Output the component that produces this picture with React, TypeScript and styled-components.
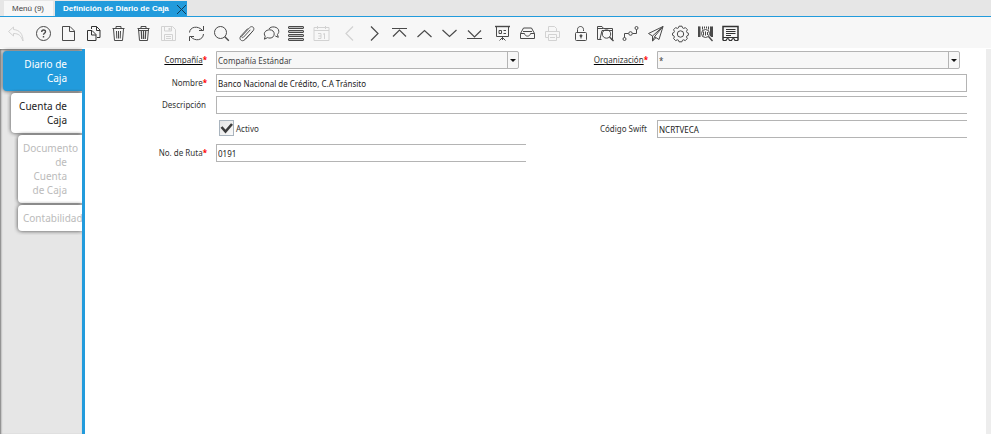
import React from "react";
import styled, { createGlobalStyle, css } from "styled-components";

const BLUE = "#229bdc";

const GlobalStyle = createGlobalStyle`
  *, *::before, *::after { box-sizing: border-box; }
  body { margin: 0; background: #fff; }
  button, input, select { font: inherit; margin: 0; }
`;

const Page = styled.div`
  min-height: 100vh;
  display: flex;
  flex-direction: column;
  font-family: "Noto Sans", sans-serif;
  font-size: 8px;
  color: #333;
`;

const WindowTabs = styled.nav`
  display: flex;
  align-items: stretch;
  gap: 2px;
  height: 17px;
  padding: 1px 4px 0;
  background: #e6e6e6;
  border-bottom: 1px solid ${BLUE};
  font-family: "Liberation Sans", sans-serif;
`;

const WindowTab = styled.div<{ $active?: boolean }>`
  display: flex;
  align-items: center;
  padding: ${(p) => (p.$active ? "0 0 0 8px" : "0 9px 0 8px")};
  background: ${(p) => (p.$active ? BLUE : "#f7f7f7")};
`;

const TabButton = styled.button<{ $active?: boolean }>`
  border: 0;
  padding: 0;
  background: none;
  white-space: nowrap;
  font-size: 8px;
  line-height: 14px;
  font-weight: ${(p) => (p.$active ? 700 : 400)};
  color: ${(p) => (p.$active ? "#fff" : "#444")};
`;

const CloseButton = styled.button`
  display: flex;
  align-items: center;
  border: 0;
  padding: 0;
  margin: 2px 0 0 7px;
  background: none;
`;

const CloseIcon = styled.svg`
  width: 11px;
  height: 11px;
  fill: none;
  stroke: #123d58;
`;

const Toolbar = styled.div`
  display: flex;
  gap: 3px;
  height: 32px;
  padding: 0 3px;
  background: #f7f7f7;
  border-bottom: 1px solid #fff;
`;

const ToolGroup = styled.div`
  display: flex;
`;

const ToolButton = styled.button`
  display: flex;
  align-items: center;
  justify-content: center;
  width: 25px;
  padding: 1px 0 0;
  border: 0;
  background: none;
  color: #4a4a4a;
  &:disabled { color: #d2d2d2; }
`;

const Glyph = styled.svg`
  width: 17px;
  height: 17px;
  flex: none;
  fill: none;
  stroke: currentColor;
  stroke-width: 1;
  overflow: visible;
`;

const Body = styled.div`
  flex: 1;
  display: flex;
`;

const Sidebar = styled.nav`
  flex: none;
  display: flex;
  flex-direction: column;
  align-items: flex-end;
  gap: 2px;
  width: 85px;
  padding-top: 2px;
  background: #e6e6e6;
  border-right: 3px solid ${BLUE};
  box-shadow: inset 1px 1px 2px #777;
`;

const SideTab = styled.button<{ $level: number; $active?: boolean }>`
  width: ${(p) => [79, 71, 64][p.$level]}px;
  padding: 6px 15px 6px 5px;
  border: 0;
  border-radius: 4px 0 0 4px;
  background: ${(p) => (p.$active ? BLUE : "#fff")};
  color: ${(p) => (p.$active ? "#fff" : "#222")};
  box-shadow: 0 0 4px #444;
  clip-path: inset(-4px 0 -4px -4px);
  text-align: right;
  font-size: 10px;
  line-height: 14px;
  &:disabled { color: #bbb; }
`;

const Content = styled.main`
  flex: 1;
  min-width: 0;
  padding: 2px 19px 0 0;
  border-right: 5px solid #ededed;
`;

const Form = styled.form`
  display: grid;
  grid-template-columns: 131fr 310fr 131fr 310fr;
  grid-template-rows: 23px 22px 24px 24px 18px;
  align-items: start;
`;

const Label = styled.label<{ $link?: boolean; $required?: boolean }>`
  justify-self: end;
  padding-right: ${(p) => (p.$required ? 9 : 10)}px;
  line-height: 18px;
  white-space: nowrap;
  color: #333;
  span {
    ${(p) => p.$link && css`
      text-decoration: underline 1px #000;
      text-decoration-skip-ink: none;
      text-underline-offset: 1px;
    `}
  }
  ${(p) => p.$required && css`&::after { content: "*"; color: #f00; font-weight: 700; }`}
`;

const TextInput = styled.input<{ $wide?: boolean; $open?: boolean }>`
  width: 100%;
  min-width: 0;
  height: 18px;
  padding: 0 1px;
  border: 1px solid #b4b4b4;
  border-radius: 0;
  background: #fff;
  color: #222;
  outline: 0;
  ${(p) => p.$wide && css`grid-column: 2 / -1;`}
  ${(p) => p.$open && css`border-right: 0;`}
`;

const Combo = styled.div`
  display: flex;
  height: 18px;
  margin-right: 7px;
  border: 1px solid #b4b4b4;
  border-radius: 0 2px 2px 0;
  background: #f7f7f7;
`;

const ComboSelect = styled.select`
  flex: 1;
  min-width: 0;
  padding: 0 1px;
  border: 0;
  appearance: none;
  background: none;
  color: #444;
  outline: 0;
`;

const ComboArrow = styled.span`
  display: flex;
  align-items: center;
  justify-content: center;
  width: 11px;
  border-left: 1px solid #b4b4b4;
  pointer-events: none;
  &::before {
    content: "";
    border: 3px solid transparent;
    border-top-color: #111;
    border-bottom: 0;
  }
`;

const CheckField = styled.label`
  grid-column: 2;
  display: flex;
  align-items: center;
  gap: 2px;
  height: 16px;
  padding-left: 3px;
`;

const CheckBox = styled.span`
  display: grid;
  > * { grid-area: 1 / 1; }
`;

const CheckInput = styled.input`
  width: 15px;
  height: 16px;
  appearance: none;
  border: 1px solid #a9b4be;
  background: linear-gradient(135deg, #e4e4e4, #fafafa);
  & + svg { visibility: hidden; }
  &:checked + svg { visibility: visible; }
`;

const CheckMark = styled.svg`
  width: 15px;
  height: 16px;
  fill: none;
  stroke: #3c3c3c;
  stroke-width: 2.6;
  pointer-events: none;
`;

type Tool = { name: string; off?: boolean; draw: React.ReactNode };

const groups: Tool[][] = [
  [
    { name: "Deshacer", off: true, draw: <path d="M6.500 2L1.500 6.500l5 4.500V8.500c5 0 7.500 2 9.500 7.500 0-6.500-3-11-9.500-11.500z" /> },
  ],
  [
    { name: "Ayuda", draw: <><circle cx="8.500" cy="8.500" r="7" /><path strokeWidth="1.400" d="M6.700 7c0-2.600 3.800-2.600 3.800-.3 0 1.500-2 1.600-2 3M8.500 11v1.400" /></> },
    { name: "Nuevo", draw: <path d="M2.500 1.500H10l4.500 4.500v9.500h-12zM9.500 1.500v5h5" /> },
    { name: "Copiar", draw: <g stroke="#333"><path d="M6.500 4V1.500h5l3.500 3.500v7.500h-3M11.500 1.500v4H15" /><path d="M2.500 5.500H7l4 4v6H2.500zM6.500 5.500v4.500H11" /></g> },
    { name: "Eliminar", draw: <path d="M2.500 3.500h12M6 3.500v-2h5v2M3.500 4l1 11.500h8l1-11.500M6.500 6l.3 7.500M8.500 6v7.500M10.500 6l-.3 7.500" /> },
    { name: "Eliminar selección", draw: <><path d="M2.500 3.500h12M6 3.500v-2h5v2M3.500 4l1 11.500h8l1-11.500M3 5.500h11" /><path strokeWidth="1.200" d="M6.300 6l.4 8M8.500 6v8M10.700 6l-.4 8" /></> },
    { name: "Guardar", off: true, draw: <><path d="M1.500 1.500h11l3 3v11h-14zM4.500 2v4h7V2M4.500 15V9.500h8V15M6 11.500h5M6 13.500h5" /><path d="M9.500 3v2.500" strokeWidth="2" /></> },
  ],
  [
    { name: "Refrescar", draw: <path d="M1.500 7.500C2 1.500 10 .5 14 5M15.500 1v4.500H11M15.500 9C15 15.500 7 16.500 3 12M1.500 16v-4.500H6" /> },
    { name: "Buscar", draw: <><circle cx="7.500" cy="7.500" r="6" /><path strokeWidth="1.400" d="M11.800 11.800l4 4" /></> },
    { name: "Adjunto", draw: <path strokeWidth=".9" d="M12.300 4.800l-6.800 7.400c-1 1.100-2.500-.2-1.500-1.300L11.500 2.700c2.700-2.800 6 .5 3.500 3.200L7 14.500c-3 3.200-7-.5-4-3.700l6.700-7.300M15 5.900l-8 8.600" /> },
    { name: "Chat", draw: <><path d="M6 4C7.500.7 15.800 1.200 15.800 6.300c0 1.700-.8 2.600-1.400 3.100l.9 2.900-3-1.300" /><path d="M6.700 4.800c5.900 0 6 8 .3 8.300-1 0-1.700-.2-2.400-.5l-3.200 1.600.8-3C-.3 8 2.900 4.800 6.700 4.800z" /></> },
    { name: "Rejilla", draw: <g fill="#bbb"><rect x=".5" y="1.500" width="15" height="2" rx=".5" /><rect x=".5" y="5.500" width="15" height="2" rx=".5" /><rect x=".5" y="9.500" width="15" height="2" rx=".5" /><rect x=".5" y="13.500" width="15" height="2" rx=".5" /></g> },
    { name: "Calendario", off: true, draw: <path d="M1 2.500h15v13H1zM1 5.500h15M4.500 1v3M12.500 1v3M5 8.500h3v5H5M5.500 11H8M10 9.300l1.500-.8v5.500" /> },
  ],
  [
    { name: "Anterior", off: true, draw: <path strokeWidth="1.200" d="M12 1.500L5 8.500l7 7" /> },
    { name: "Siguiente", draw: <path strokeWidth="1.200" d="M5 1.500l7 7-7 7" /> },
    { name: "Primer registro", draw: <path strokeWidth="1.200" d="M1 3.500h15M2 11.500L8.500 5 15 11.500" /> },
    { name: "Registro anterior", draw: <path strokeWidth="1.200" d="M1.500 12l7-6.500 7 6.500" /> },
    { name: "Registro siguiente", draw: <path strokeWidth="1.200" d="M1.500 5l7 6.500 7-6.500" /> },
    { name: "Último registro", draw: <path strokeWidth="1.200" d="M1 13.500h15M2 5.500l6.500 6.500L15 5.500" /> },
  ],
  [
    { name: "Informe", draw: <><path strokeWidth="1.400" d="M1 1.500h15" /><path d="M2.500 2v9.500h12V2M8.500 11.500V15M5.500 15.500l3-3 3 3M5 5.500h2.500v3H5zM9.500 5.500H12M9.500 8.500H12" /></> },
    { name: "Archivo", draw: <path d="M1.500 8.500l3-5.500h8l3 5.500v5h-14zM1.500 8.500h4c.5 3.500 5.500 3.500 6 0h4M4 6.500h9" /> },
    { name: "Imprimir", off: true, draw: <path d="M4.500 6V1.500h6l2 2V6M4 12.500H1.500v-6h14v6H13M4.500 9.500h8v6h-8zM6 12.500h5" /> },
  ],
  [
    { name: "Bloquear", draw: <><rect x="3.500" y="7.500" width="11" height="8" rx="1" /><path d="M5.500 7.500v-3c0-4 6-4 6 0V6" /><circle cx="9" cy="10.800" r="1" fill="currentColor" /><path d="M9 11v2.500" /></> },
    { name: "Acercar", draw: <><path d="M4.500 14.500h-4v-13H5L6.500 3.500h9v11H14M1 3.500h5.500M16 5.500H5L3 14" /><circle cx="9.500" cy="9" r="4.200" /><path strokeWidth="1.400" d="M12.500 12l4 4" /></> },
    { name: "Flujo de trabajo", draw: <><path d="M2.500 12.500v-4H6.500M10.500 8.500h4v-4" /><circle cx="2.500" cy="14" r="1.500" /><circle cx="8.500" cy="8.500" r="1.800" /><circle cx="14.500" cy="3" r="1.500" /></> },
    { name: "Solicitudes", draw: <path d="M16 1.500l-14.500 7 4 2.500L16 1.500l-4 13-4.500-2.800L16 1.500M5.500 11v5l2.200-4.300M5.500 16l3.500-3.300" /> },
    { name: "Proceso", draw: <><path strokeLinejoin="round" d="M7 1.200h3l.6 1.700 1.100.5 1.700-.8 2 2.100-.9 1.700.4 1.100 1.500.7v2l-1.500.7-.4 1 .8 1.700-2 2-1.800-.8-1 .4-.6 1.600H7l-.6-1.600-1-.4-1.800.8-2-2 .8-1.700-.4-1L.5 10.200v-2l1.500-.7.4-1.100-.8-1.700 2-2.100 1.700.8 1.100-.5z" /><circle cx="8.500" cy="9" r="3.200" /></> },
    { name: "Producto", draw: <><path d="M1.500 1.500V12M3 1.500V12M5.500 1.500v3M7.500 1.500v2M9.500 1.500v2M11.500 1.500v3M13.500 1.500V11M15.500 1.500V12" /><path strokeWidth="1.500" d="M2.200 1.500V12M14.500 1.500V12" /><circle cx="8.500" cy="8.500" r="4" /><path d="M6.500 6.500v4M8.500 6.500v4M10.500 7v3" /><path strokeWidth="1.400" d="M11.500 11.500l4 4.500" /></> },
    { name: "Personalizar", draw: <g stroke="#333"><path strokeWidth="1.500" d="M1 15.500v-14h15v14" /><path d="M1 12.500h15M4 4.500h9.500M4 6.500h9.500M4 8.500h9.500M4 10.500h5" /><path strokeWidth="1.200" d="M1 15.500h3c1-2.700 2.500-2.700 3.500 0h2c1-2.700 2.500-2.700 3.500 0h3" /></g> },
  ],
];

const sideTabs = [
  { text: "Diario de Caja", level: 0, active: true },
  { text: "Cuenta de Caja", level: 1 },
  { text: "Documento de Cuenta de Caja", level: 2, off: true },
  { text: "Contabilidad", level: 2, off: true },
];

function ComboBox({ id, value }: { id: string; value: string }) {
  return (
    <Combo>
      <ComboSelect id={id} defaultValue={value}>
        <option>{value}</option>
      </ComboSelect>
      <ComboArrow />
    </Combo>
  );
}

export default function App() {
  return (
    <Page>
      <GlobalStyle />
      <WindowTabs>
        <WindowTab>
          <TabButton>Menú (9)</TabButton>
        </WindowTab>
        <WindowTab $active>
          <TabButton $active>Definición de Diario de Caja</TabButton>
          <CloseButton aria-label="Cerrar">
            <CloseIcon viewBox="0 0 11 11">
              <path d="M1 1l9 9M10 1l-9 9" />
            </CloseIcon>
          </CloseButton>
        </WindowTab>
      </WindowTabs>
      <Toolbar>
        {groups.map((group) => (
          <ToolGroup key={group[0].name}>
            {group.map((tool) => (
              <ToolButton key={tool.name} aria-label={tool.name} disabled={tool.off}>
                <Glyph viewBox="0 0 17 17">{tool.draw}</Glyph>
              </ToolButton>
            ))}
          </ToolGroup>
        ))}
      </Toolbar>
      <Body>
        <Sidebar>
          {sideTabs.map((tab) => (
            <SideTab key={tab.text} $level={tab.level} $active={tab.active} disabled={tab.off}>
              {tab.text}
            </SideTab>
          ))}
        </Sidebar>
        <Content>
          <Form>
            <Label htmlFor="company" $link $required><span>Compañía</span></Label>
            <ComboBox id="company" value="Compañía Estándar" />
            <Label htmlFor="org" $link $required><span>Organización</span></Label>
            <ComboBox id="org" value="*" />
            <Label htmlFor="name" $required><span>Nombre</span></Label>
            <TextInput id="name" $wide defaultValue="Banco Nacional de Crédito, C.A Tránsito" />
            <Label htmlFor="description"><span>Descripción</span></Label>
            <TextInput id="description" $wide $open />
            <CheckField>
              <CheckBox>
                <CheckInput type="checkbox" defaultChecked />
                <CheckMark viewBox="0 0 15 16"><path d="M2.500 7l4 4.500L13 4" /></CheckMark>
              </CheckBox>
              Activo
            </CheckField>
            <Label htmlFor="swift"><span>Código Swift</span></Label>
            <TextInput id="swift" $open defaultValue="NCRTVECA" />
            <Label htmlFor="routing" $required><span>No. de Ruta</span></Label>
            <TextInput id="routing" $open defaultValue="0191" />
          </Form>
        </Content>
      </Body>
    </Page>
  );
}
